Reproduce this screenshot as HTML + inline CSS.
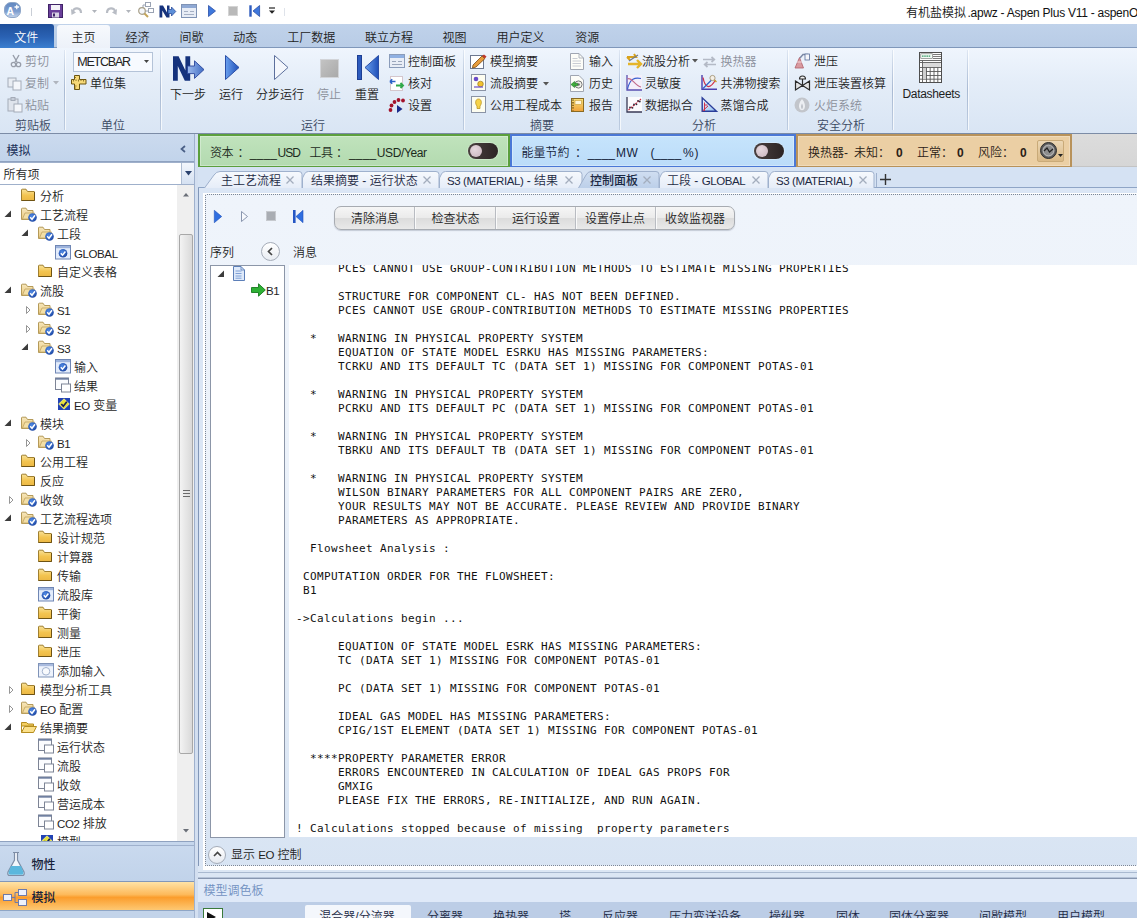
<!DOCTYPE html>
<html lang="zh-CN"><head><meta charset="utf-8"><title>Aspen Plus</title><style>
html,body{margin:0;padding:0}
body{width:1137px;height:918px;overflow:hidden;position:relative;background:#cddcf0;font-family:"Liberation Sans","Noto Sans CJK SC",sans-serif;font-size:12px;color:#1e1e1e;font-weight:350}
.a{position:absolute}
.t{position:absolute;white-space:nowrap;line-height:16px;height:16px}
.c{text-align:center}
.g{color:#8b909b}
svg{position:absolute;overflow:visible}
pre{margin:0}
.l{font-size:11.5px;letter-spacing:-.4px}
</style></head><body>
<div class="a" style="left:0px;top:0px;width:1137px;height:24px;background:#fff"></div>
<div class="t " style="left:906px;top:5px;color:#111">有机盐模拟</div>
<div class="t " id="fit0" style="left:967.5px;top:5px;letter-spacing:-0.260px;color:#111">.apwz - Aspen Plus V11 - aspenO</div>
<div class="a" style="left:0px;top:23.5px;width:1137px;height:24.5px;background:linear-gradient(#c0d2ea,#b8cce6)"></div>
<div class="a" style="left:0px;top:47px;width:1137px;height:1px;background:#7f97ba"></div>
<div class="a" style="left:0px;top:24px;width:54px;height:24px;background:linear-gradient(#1f4f9a 0%,#2a62b4 55%,#3b7fd0 100%);border-radius:0 3px 0 0"></div>
<div class="t c " style="left:-33.7px;width:120px;top:30px;color:#fff">文件</div>
<div class="a" style="left:57px;top:25px;width:53px;height:24px;background:linear-gradient(#f7f9fd,#ecf1f9);border-radius:3px 3px 0 0"></div>
<div class="t c " style="left:23.5px;width:120px;top:30px;color:#222">主页</div>
<div class="t c " style="left:77.5px;width:120px;top:30px;color:#222">经济</div>
<div class="t c " style="left:131.5px;width:120px;top:30px;color:#222">间歇</div>
<div class="t c " style="left:185.3px;width:120px;top:30px;color:#222">动态</div>
<div class="t c " style="left:251.3px;width:120px;top:30px;color:#222">工厂数据</div>
<div class="t c " style="left:329px;width:120px;top:30px;color:#222">联立方程</div>
<div class="t c " style="left:394.5px;width:120px;top:30px;color:#222">视图</div>
<div class="t c " style="left:460.5px;width:120px;top:30px;color:#222">用户定义</div>
<div class="t c " style="left:527.3px;width:120px;top:30px;color:#222">资源</div>
<div class="a" style="left:0px;top:48px;width:1137px;height:85px;background:linear-gradient(#eff5fd 0%,#e4edf8 40%,#d9e5f4 100%)"></div>
<div class="a" style="left:0px;top:133px;width:1137px;height:1px;background:#7c8ca6"></div>
<div class="a" style="left:64px;top:50px;width:1px;height:80px;background:linear-gradient(rgba(160,178,204,.2),#a9bad3 50%,rgba(160,178,204,.5))"></div>
<div class="a" style="left:65px;top:50px;width:1px;height:80px;background:rgba(255,255,255,.7)"></div>
<div class="a" style="left:160px;top:50px;width:1px;height:80px;background:linear-gradient(rgba(160,178,204,.2),#a9bad3 50%,rgba(160,178,204,.5))"></div>
<div class="a" style="left:161px;top:50px;width:1px;height:80px;background:rgba(255,255,255,.7)"></div>
<div class="a" style="left:463px;top:50px;width:1px;height:80px;background:linear-gradient(rgba(160,178,204,.2),#a9bad3 50%,rgba(160,178,204,.5))"></div>
<div class="a" style="left:464px;top:50px;width:1px;height:80px;background:rgba(255,255,255,.7)"></div>
<div class="a" style="left:619px;top:50px;width:1px;height:80px;background:linear-gradient(rgba(160,178,204,.2),#a9bad3 50%,rgba(160,178,204,.5))"></div>
<div class="a" style="left:620px;top:50px;width:1px;height:80px;background:rgba(255,255,255,.7)"></div>
<div class="a" style="left:787px;top:50px;width:1px;height:80px;background:linear-gradient(rgba(160,178,204,.2),#a9bad3 50%,rgba(160,178,204,.5))"></div>
<div class="a" style="left:788px;top:50px;width:1px;height:80px;background:rgba(255,255,255,.7)"></div>
<div class="a" style="left:892px;top:50px;width:1px;height:80px;background:linear-gradient(rgba(160,178,204,.2),#a9bad3 50%,rgba(160,178,204,.5))"></div>
<div class="a" style="left:893px;top:50px;width:1px;height:80px;background:rgba(255,255,255,.7)"></div>
<div class="a" style="left:967px;top:50px;width:1px;height:80px;background:linear-gradient(rgba(160,178,204,.2),#a9bad3 50%,rgba(160,178,204,.5))"></div>
<div class="a" style="left:968px;top:50px;width:1px;height:80px;background:rgba(255,255,255,.7)"></div>
<div class="t c " style="left:-27px;width:120px;top:118px;color:#3b4a63">剪贴板</div>
<div class="t c " style="left:53px;width:120px;top:118px;color:#3b4a63">单位</div>
<div class="t c " style="left:253px;width:120px;top:118px;color:#3b4a63">运行</div>
<div class="t c " style="left:482px;width:120px;top:118px;color:#3b4a63">摘要</div>
<div class="t c " style="left:644px;width:120px;top:118px;color:#3b4a63">分析</div>
<div class="t c " style="left:781px;width:120px;top:118px;color:#3b4a63">安全分析</div>
<svg style="left:9px;top:54px" width="14" height="14" viewBox="0 0 14 14"><path d="M4 1 L8 8 M10 1 L6 8" stroke="#989eaa" stroke-width="1.4" fill="none"/><circle cx="4.5" cy="10.5" r="2.2" fill="none" stroke="#989eaa" stroke-width="1.3"/><circle cx="9.5" cy="10.5" r="2.2" fill="none" stroke="#989eaa" stroke-width="1.3"/></svg>
<div class="t g" style="left:25px;top:54px;">剪切</div>
<svg style="left:7px;top:76px" width="16" height="14" viewBox="0 0 16 14"><rect x="1" y="2" width="8" height="9" fill="#e9edf3" stroke="#a4abb8"/><rect x="6" y="5" width="8" height="9" fill="#f4f6fa" stroke="#a4abb8"/></svg>
<div class="t g" style="left:25px;top:76px;">复制</div>
<svg style="left:53px;top:81px" width="6" height="4" viewBox="0 0 6 4"><path d="M0 0 H6 L3 3.5Z" fill="#b0b5be"/></svg>
<svg style="left:7px;top:97px" width="16" height="15" viewBox="0 0 16 15"><rect x="1" y="2" width="10" height="12" fill="#dfe4ec" stroke="#a4abb8"/><rect x="4" y="0.5" width="4" height="3" fill="#c5ccd8" stroke="#a4abb8"/><rect x="7" y="7" width="8" height="8" fill="#f4f6fa" stroke="#a4abb8"/></svg>
<div class="t g" style="left:25px;top:98px;">粘贴</div>
<div class="a" style="left:73px;top:51.5px;width:80px;height:20px;background:#f7faff;border:1px solid #b4c3d8;box-sizing:border-box"></div>
<div class="t " id="fit1" style="left:77.3px;top:54px;letter-spacing:-1.232px;color:#222;font-size:12.5px">METCBAR</div>
<svg style="left:144px;top:60px" width="5" height="3" viewBox="0 0 5 3"><path d="M0 0 H5 L2.500 3Z" fill="#444"/></svg>
<svg style="left:71px;top:75px" width="16" height="15" viewBox="0 0 16 15"><path d="M3.500 .5 H8.500 V4.500 H15 V9 H8.500 V14.500 H3.500 V9 H.5 V4.500 H3.500Z" fill="#f7d978" stroke="#6b5512" stroke-width="1"/><path d="M2.500 4.500v2M5 4.500v1.500M7.500 4.500v2M10 4.500v1.500M12.500 4.500v2M3.500 2.500h1.500M3.500 11h2M3.500 13h1.500" stroke="#7a6216" stroke-width=".8"/></svg>
<div class="t " style="left:90px;top:76px;">单位集</div>
<svg style="left:172px;top:55px" width="33" height="27" viewBox="0 0 33 27"><defs><linearGradient id="ng" x1="0" y1="0" x2="1" y2="0"><stop offset="0" stop-color="#9dbbee"/><stop offset="1" stop-color="#3f6cc4"/></linearGradient></defs><path d="M1 25.7 V1.3 H6.6 L13.4 15.5 V1.3 H18.2 V25.7 H12.8 L5.8 11 V25.7Z" fill="#15327c"/><path d="M15.5 11 H22.5 V5.8 L32 14.6 L22.5 23.4 V18.6 H15.5Z" fill="url(#ng)" stroke="#2a469c" stroke-width=".9"/></svg>
<div class="t c " style="left:128px;width:120px;top:87px;">下一步</div>
<svg style="left:225px;top:55px" width="15" height="25" viewBox="0 0 15 25"><defs><linearGradient id="gr1" x1="0" x2="1"><stop offset="0" stop-color="#6aa0ee"/><stop offset="1" stop-color="#1f4fb8"/></linearGradient></defs><path d="M0.5 0.5 L14 12.5 L0.5 24.5Z" fill="url(#gr1)" stroke="#2a4ea6" stroke-width="1"/></svg>
<div class="t c " style="left:171px;width:120px;top:87px;">运行</div>
<svg style="left:274px;top:55px" width="15" height="25" viewBox="0 0 15 25"><path d="M0.5 0.5 L14 12.5 L0.5 24.5Z" fill="#f4f7fc" stroke="#5c6f9c" stroke-width="1"/></svg>
<div class="t c " style="left:220px;width:120px;top:87px;">分步运行</div>
<svg style="left:320px;top:58.5px" width="19" height="19" viewBox="0 0 19 19"><defs><linearGradient id="sg" x1="0" y1="0" x2="1" y2="1"><stop offset="0" stop-color="#c4c4c4"/><stop offset="1" stop-color="#a9a9a9"/></linearGradient></defs><rect x=".5" y=".5" width="18" height="18" fill="url(#sg)" stroke="#d2d4d8"/></svg>
<div class="t c g" style="left:269px;width:120px;top:87px;">停止</div>
<svg style="left:357px;top:55px" width="22" height="25" viewBox="0 0 22 25"><rect x="0.5" y="0.5" width="4" height="24" fill="#2d5bbd" stroke="#1d3f94"/><path d="M21.5 0.5 L8 12.5 L21.5 24.5Z" fill="url(#gr1)" stroke="#2a4ea6" stroke-width="1"/></svg>
<div class="t c " style="left:307px;width:120px;top:87px;">重置</div>
<svg style="left:389px;top:54px" width="16" height="14" viewBox="0 0 16 14"><rect x=".5" y=".5" width="15" height="13" fill="#e8edf6" stroke="#8a9cba"/><rect x="1" y="1" width="14" height="3" fill="#8fb0e2"/><path d="M3 7.500h4M9 7.500h4M3 10.500h10" stroke="#9aa6bb" stroke-width="1"/></svg>
<div class="t " style="left:408px;top:54px;">控制面板</div>
<svg style="left:389px;top:76px" width="15" height="15" viewBox="0 0 15 15"><rect x="1.500" y=".5" width="12" height="14" fill="#fff" stroke="#d4c6cc"/><path d="M1 5.500h5.500M1 5.500l2.200-2.200M1 5.500l2.200 2.200" stroke="#2c62c9" stroke-width="1.600" fill="none"/><path d="M7 9.500h7M11.500 7l2.500 2.500-2.500 2.500" stroke="#2fa84a" stroke-width="1.900" fill="none"/></svg>
<div class="t " style="left:408px;top:76px;">核对</div>
<svg style="left:388px;top:97px" width="18" height="16" viewBox="0 0 18 16"><g fill="#a3122a"><circle cx="2.5" cy="13" r="1.9"/><circle cx="3.5" cy="8.5" r="1.9"/><circle cx="6.5" cy="5" r="1.9"/><circle cx="10.5" cy="3" r="1.9"/><circle cx="15" cy="3.5" r="1.9"/></g><path d="M9 8 L14.5 12 L9 16Z" fill="#1b2c8c"/></svg>
<div class="t " style="left:408px;top:98px;">设置</div>
<svg style="left:470px;top:53px" width="17" height="16" viewBox="0 0 17 16"><rect x=".5" y="2.5" width="13" height="13" fill="#fff" stroke="#6c7890"/><path d="M3 12 L12 3 L15 5.5 L6 14 L2.5 15Z" fill="#e79c3c" stroke="#7a4a12" stroke-width=".8"/><path d="M12 3 L15 5.5 L16.5 3.5 L14 1.5Z" fill="#c0392b"/></svg>
<div class="t " style="left:490px;top:54px;">模型摘要</div>
<svg style="left:471px;top:74px" width="15" height="17" viewBox="0 0 15 17"><rect x=".5" y=".5" width="14" height="16" fill="#fdfdf0" stroke="#8a93a5"/><circle cx="5" cy="5" r="2.3" fill="#6a4cc9"/><circle cx="9.5" cy="10" r="2.8" fill="#f2c12e" stroke="#8c6d10" stroke-width=".6"/><path d="M3 13h9" stroke="#6a4cc9" stroke-width="1.2"/></svg>
<div class="t " style="left:490px;top:76px;">流股摘要</div>
<svg style="left:543px;top:82px" width="6" height="4" viewBox="0 0 6 4"><path d="M0 0 H6 L3 3.5Z" fill="#555"/></svg>
<svg style="left:471px;top:96px" width="15" height="17" viewBox="0 0 15 17"><rect x=".5" y=".5" width="14" height="16" fill="#fdfdf0" stroke="#8a93a5"/><path d="M7.5 3 C4 3 4 8 6 10 V12.5 H9 V10 C11 8 11 3 7.5 3Z" fill="#f6d34a" stroke="#b48c14" stroke-width=".7"/></svg>
<div class="t " style="left:490px;top:98px;">公用工程成本</div>
<svg style="left:570px;top:53px" width="14" height="17" viewBox="0 0 14 17"><path d="M.5 .5 H9 L13.500 5 V16.500 H.5Z" fill="#fdfdf8" stroke="#a0a6b2"/><path d="M9 .5 V5 H13.500" fill="none" stroke="#a0a6b2" stroke-width=".8"/><path d="M2.500 5.500h5M2.500 8h8.500M2.500 10.500h8.500M2.500 13h8.500" stroke="#c9ccd4" stroke-width="1"/></svg>
<div class="t " style="left:589px;top:54px;">输入</div>
<svg style="left:570px;top:75px" width="14" height="17" viewBox="0 0 14 17"><path d="M.5 .5 H9 L13.500 5 V16.500 H.5Z" fill="#fdfdf8" stroke="#a0a6b2"/><circle cx="8.500" cy="9.500" r="3.600" fill="#f1f1ea" stroke="#777" stroke-width="1"/><circle cx="8.500" cy="9.500" r="1.300" fill="#666"/><path d="M1 9.500 L4.500 6.500 V8.300 H7.500 V10.700 H4.500 V12.500Z" fill="#3fae3a" stroke="#1f7a22" stroke-width=".6"/></svg>
<div class="t " style="left:589px;top:76px;">历史</div>
<svg style="left:571px;top:97.5px" width="13" height="14" viewBox="0 0 13 14"><defs><linearGradient id="rg" x1="0" y1="0" x2="0" y2="1"><stop offset="0" stop-color="#f7e27a"/><stop offset="1" stop-color="#f0a23a"/></linearGradient></defs><rect x=".5" y=".5" width="12" height="13" fill="url(#rg)" stroke="#8a6a22"/><rect x="4" y="2.500" width="6.500" height="4" fill="#fff6d8" stroke="#c79a3a" stroke-width=".6"/><path d="M2 1.500v11" stroke="#5a4310" stroke-width="1.300" stroke-dasharray="1.300 1.300"/></svg>
<div class="t " style="left:589px;top:98px;">报告</div>
<svg style="left:626px;top:53px" width="17" height="15" viewBox="0 0 17 15"><path d="M1 4h9l-2-3M1 4l3 3" stroke="#d9a21b" stroke-width="2" fill="none"/><path d="M2 11h13M11 7l4 4-4 4" stroke="#e5b52a" stroke-width="2.4" fill="none"/><path d="M3 8 L12 2" stroke="#6d7a8f" stroke-width="1.2"/></svg>
<div class="t " style="left:642px;top:54px;">流股分析</div>
<svg style="left:692px;top:59px" width="6" height="4" viewBox="0 0 6 4"><path d="M0 0 H6 L3 3.5Z" fill="#555"/></svg>
<svg style="left:702px;top:55.5px" width="15" height="12" viewBox="0 0 15 12"><path d="M1 3.500h11M9.500 1l2.800 2.500-2.800 2.500M14 8.500H3M5.500 6L2.700 8.500l2.800 2.500" stroke="#b4bac6" stroke-width="1.700" fill="none"/></svg>
<div class="t g" style="left:720.5px;top:54px;">换热器</div>
<svg style="left:626px;top:74.5px" width="16" height="16" viewBox="0 0 16 16"><rect x="1" y="0" width="15" height="15" fill="#f4f0fa"/><path d="M1 0 V15 H16" stroke="#5a4fb0" stroke-width="1.300" fill="none"/><path d="M1.500 14 C4 3 9 2.500 15 3.500" stroke="#3b5fd0" stroke-width="1.200" fill="none"/><path d="M1.500 4 C5 1 9 11 15 12" stroke="#c06a8a" stroke-width="1.100" fill="none"/></svg>
<div class="t " style="left:645px;top:76px;">灵敏度</div>
<svg style="left:701px;top:75px" width="16" height="15" viewBox="0 0 16 15"><path d="M1 0 V14.300 H16" stroke="#4a3fae" stroke-width="1.400" fill="none"/><path d="M2 2.500 C4 13 8.500 15 14.500 5" stroke="#d0304a" stroke-width="1.300" fill="none"/><path d="M2 13.500 L12 3.500" stroke="#2e62c9" stroke-width="1.200"/><circle cx="11.500" cy="3" r="2.600" fill="#f4efe6" stroke="#9a8a6a" stroke-width=".8"/><path d="M13.300 5 L15.500 7" stroke="#c9a23a" stroke-width="1.600"/></svg>
<div class="t " style="left:720.5px;top:76px;">共沸物搜索</div>
<svg style="left:626px;top:97px" width="16" height="16" viewBox="0 0 16 16"><rect x="1" y="0" width="15" height="15" fill="#fbfbfd"/><path d="M1 0 V15 H16" stroke="#3a3a55" stroke-width="1.300" fill="none"/><path d="M2.500 13 L15 2" stroke="#d0213a" stroke-width="1.100" stroke-dasharray="2 1"/><g fill="#2a2a3a"><circle cx="4" cy="10.500" r=".9"/><circle cx="6.500" cy="10.800" r=".9"/><circle cx="8" cy="7.500" r=".9"/><circle cx="10.500" cy="7.300" r=".9"/><circle cx="12" cy="3.800" r=".9"/><circle cx="13.800" cy="4.500" r=".9"/></g></svg>
<div class="t " style="left:645px;top:98px;">数据拟合</div>
<svg style="left:701px;top:97px" width="16" height="15" viewBox="0 0 16 15"><defs><linearGradient id="dg" x1="0" y1="0" x2="1" y2="1"><stop offset="0" stop-color="#f6f8ff"/><stop offset="1" stop-color="#8fc0f0"/></linearGradient></defs><path d="M1.200 .8 V14.300 H15.500Z" fill="url(#dg)" stroke="#2b3d9a" stroke-width="1.400"/><path d="M3.500 14 V5.500 M3.500 8 H6.500 M1.500 14 L7 9" stroke="#d0304a" stroke-width="1" fill="none"/></svg>
<div class="t " style="left:720.5px;top:98px;">蒸馏合成</div>
<svg style="left:794px;top:53px" width="17" height="16" viewBox="0 0 17 16"><path d="M1 15 L5.500 4.500 L9.500 15Z" fill="#d99aa0" stroke="#b0606a" stroke-width=".8"/><path d="M3 9 L8 9" stroke="#f3d6d8" stroke-width="1"/><path d="M6 5 L9 1.500 H14" stroke="#7d8aa6" stroke-width="1.500" fill="none"/><rect x="11" y="1" width="4.500" height="6" fill="#f4f6fa" stroke="#5a6f9a" stroke-width=".8"/></svg>
<div class="t " style="left:814px;top:54px;">泄压</div>
<svg style="left:794px;top:75px" width="17" height="16" viewBox="0 0 17 16"><path d="M1.500 6 L8.500 10.500 L1.500 15Z M15.500 6 L8.500 10.500 L15.500 15Z" fill="#e4e4e4" stroke="#2a2a2a" stroke-width="1.200"/><path d="M8.500 10.500 V4" stroke="#2a2a2a" stroke-width="1.200"/><path d="M5.500 4 A3 3 0 0 1 11.500 4Z" fill="#f4f4f4" stroke="#2a2a2a" stroke-width="1.100"/></svg>
<div class="t " style="left:814px;top:76px;">泄压装置核算</div>
<svg style="left:794px;top:96.5px" width="16" height="16" viewBox="0 0 16 16"><circle cx="8" cy="8" r="7.500" fill="#c2c5cb"/><path d="M8 2 C5 5.500 4.300 9 5.500 11.500 C6.500 13.700 9.500 13.700 10.500 11.500 C11.700 9 11 5.500 8 2Z" fill="#eceef2"/><path d="M8 6.500 C7 8.500 6.800 10.500 8 12.300 C9.200 10.500 9 8.500 8 6.500Z" fill="#b4b8c0"/></svg>
<div class="t g" style="left:814px;top:98px;">火炬系统</div>
<svg style="left:919px;top:52px" width="23" height="31" viewBox="0 0 23 31"><rect x=".5" y=".5" width="22" height="30" fill="#fdfdfd" stroke="#4e4e4e"/><rect x="1.800" y="1.800" width="11.500" height="4.700" fill="#f3fbf5" stroke="#6a6a6a" stroke-width=".6"/><path d="M3 4.200h8.500" stroke="#3a9a6a" stroke-width="1.300" stroke-dasharray="1.600 .6"/><path d="M14 2.500h8M14 4.500h8M14 6.500h8" stroke="#5a5a5a" stroke-width=".8"/><rect x="4" y="11" width="17.500" height="4" fill="#d9d9d9"/><path d="M1 8.500h21M1 10.500h21M1 15.500h21M1 19.500h21M1 23.500h21M1 27.200h21" stroke="#5a5a5a" stroke-width=".9"/><path d="M3.500 8.500V30M7.500 15.500V30M11.200 15.500V30M15 15.500V30M18.800 15.500V30" stroke="#5a5a5a" stroke-width=".9"/><rect x="4" y="16" width="3" height="11" fill="#cfcfcf"/></svg>
<div class="t " id="fit2" style="left:902.5px;top:86px;letter-spacing:-0.320px;">Datasheets</div>
<svg style="left:4px;top:2px" width="17" height="16" viewBox="0 0 17 16"><defs><linearGradient id="ag" x1="0" y1="0" x2="0" y2="1"><stop offset="0" stop-color="#5f86bf"/><stop offset=".6" stop-color="#7f9fd0"/><stop offset="1" stop-color="#c6d6ec"/></linearGradient></defs><rect x=".5" y=".5" width="16" height="15" rx="6.500" ry="6.500" fill="url(#ag)" stroke="#8ea6c8" stroke-width="1"/><text x="2.600" y="12.500" font-family="Liberation Sans,sans-serif" font-weight="bold" font-size="10.500" fill="#fff">A</text><path d="M10.500 5h4.500M12.750 2.800v4.400" stroke="#fff" stroke-width="1.300"/></svg>
<div class="a" style="left:31px;top:8px;width:1px;height:8px;background:#c9ced6"></div>
<svg style="left:48px;top:4px" width="15" height="14" viewBox="0 0 15 14"><rect x=".5" y=".5" width="14" height="13" fill="#6a3f9a" stroke="#3f2366"/><rect x="3" y="1" width="9" height="5" fill="#f3f1f7"/><rect x="4" y="8.5" width="7" height="5" fill="#d8d2e4"/><rect x="5" y="9.5" width="2" height="3" fill="#3f2366"/></svg>
<svg style="left:71px;top:5px" width="12" height="11" viewBox="0 0 12 11"><path d="M2 7 C2 2 10 2 10 8" stroke="#b8bcc4" stroke-width="2.2" fill="none"/><path d="M0 4 L5 7.5 L0.5 10Z" fill="#b8bcc4"/></svg>
<svg style="left:92px;top:10px" width="5" height="3" viewBox="0 0 5 3"><path d="M0 0H5L2.5 3Z" fill="#b0b4bb"/></svg>
<svg style="left:105px;top:5px" width="12" height="11" viewBox="0 0 12 11"><path d="M10 7 C10 2 2 2 2 8" stroke="#b8bcc4" stroke-width="2.2" fill="none"/><path d="M12 4 L7 7.5 L11.5 10Z" fill="#b8bcc4"/></svg>
<svg style="left:126px;top:10px" width="5" height="3" viewBox="0 0 5 3"><path d="M0 0H5L2.5 3Z" fill="#b0b4bb"/></svg>
<svg style="left:137px;top:2px" width="17" height="17" viewBox="0 0 17 17"><rect x="8.5" y=".5" width="5" height="4" fill="#fff" stroke="#9aa3b3"/><rect x="11.5" y="6.5" width="5" height="4" fill="#fff" stroke="#9aa3b3"/><path d="M8 3H6v6h5" stroke="#9aa3b3" fill="none"/><circle cx="5" cy="9" r="3.3" fill="#f5f7fb" stroke="#a8a08a" stroke-width="1.2"/><path d="M7.5 11.5 L11 15" stroke="#c4a55a" stroke-width="2"/></svg>
<svg style="left:159px;top:5px" width="17" height="13" viewBox="0 0 17 13"><path d="M.5 12.5 V.5 H4 L8 7.5 V.5 H10.5 V12.5 H7.5 L3.3 5.5 V12.5Z" fill="#15327c"/><path d="M9 4.5 H12.5 V2 L16.8 6.5 L12.5 11 V8.5 H9Z" fill="#5d8fd8" stroke="#1d3f94" stroke-width=".7"/></svg>
<svg style="left:181px;top:4px" width="16" height="14" viewBox="0 0 16 14"><rect x=".5" y=".5" width="15" height="13" fill="#e8edf6" stroke="#7f93b5"/><rect x="1" y="1" width="14" height="3" fill="#8fa9d4"/><path d="M3 7.5h4M9 7.5h4M3 10.5h10" stroke="#a5b0c4" stroke-width="1"/></svg>
<svg style="left:208px;top:5px" width="8" height="12" viewBox="0 0 8 12"><path d="M.5 .5 L7.5 6 L.5 11.5Z" fill="#3f78dc" stroke="#2a4ea6" stroke-width=".8"/></svg>
<svg style="left:228px;top:6px" width="10" height="10" viewBox="0 0 10 10"><rect x=".5" y=".5" width="9" height="9" fill="#b9b9b9" stroke="#d4d4d4"/></svg>
<svg style="left:249px;top:5px" width="11" height="12" viewBox="0 0 11 12"><rect x=".3" y=".3" width="2.4" height="11.4" fill="#2d5bbd"/><path d="M10.6 .5 L4 6 L10.6 11.5Z" fill="#3f78dc" stroke="#2a4ea6" stroke-width=".8"/></svg>
<svg style="left:269px;top:8px" width="6" height="6" viewBox="0 0 6 6"><path d="M0 0H6" stroke="#222" stroke-width="1.2"/><path d="M0 2.5H6L3 5.8Z" fill="#222"/></svg>
<div class="a" style="left:284px;top:8px;width:1px;height:8px;background:#dfe3ea"></div>
<div class="a" style="left:0px;top:134px;width:1137px;height:36px;background:#c9d8ec"></div>
<div class="a" style="left:0px;top:134px;width:196px;height:28px;background:linear-gradient(#cbdaee,#c2d4eb);border-bottom:1px solid #8fa2c0;box-sizing:border-box"></div>
<div class="t " style="left:6.5px;top:143px;color:#1a2f58;font-weight:400">模拟</div>
<svg style="left:180px;top:145px" width="6" height="8" viewBox="0 0 6 8"><path d="M5 1 L1.5 4 L5 7" stroke="#4a5f86" stroke-width="1.7" fill="none"/></svg>
<div class="a" style="left:0px;top:162px;width:195px;height:23px;background:#fff;border:1px solid #9fb0cb;border-left:none;box-sizing:border-box"></div>
<div class="t " style="left:3.5px;top:167px;">所有项</div>
<div class="a" style="left:181px;top:163px;width:13px;height:21px;background:linear-gradient(#f2f6fc,#d5e1f2);border-left:1px solid #aebdd3;box-sizing:border-box"></div>
<svg style="left:185px;top:171px" width="7" height="5" viewBox="0 0 7 5"><path d="M0 0H7L3.5 4.5Z" fill="#2a426e"/></svg>
<div class="a" style="left:0px;top:185px;width:196px;height:656px;background:#fff;overflow:hidden"></div>
<div class="a" style="left:177px;top:185px;width:17px;height:656px;background:#efefef"></div>
<svg style="left:183px;top:193px" width="6" height="4" viewBox="0 0 6 4"><path d="M0 3.5 L3 0 L6 3.5Z" fill="#6a6f78"/></svg>
<svg style="left:183px;top:829px" width="6" height="4" viewBox="0 0 6 4"><path d="M0 0 L3 3.5 L6 0Z" fill="#6a6f78"/></svg>
<div class="a" style="left:179px;top:234px;width:14px;height:520px;background:linear-gradient(90deg,#f3f3f3,#d9d9d9);border:1px solid #a8a8a8;border-radius:2px;box-sizing:border-box"></div>
<div class="a" style="left:183px;top:490px;width:7px;height:1px;background:#6a6a6a"></div>
<div class="a" style="left:183px;top:493px;width:7px;height:1px;background:#6a6a6a"></div>
<div class="a" style="left:183px;top:496px;width:7px;height:1px;background:#6a6a6a"></div>
<svg width="0" height="0" style="left:0;top:0"><defs><linearGradient id="fg" x1="0" y1="0" x2="0" y2="1"><stop offset="0" stop-color="#f8e29a"/><stop offset=".55" stop-color="#f3c450"/><stop offset="1" stop-color="#ecb844"/></linearGradient><linearGradient id="fg2" x1="0" y1="0" x2="0" y2="1"><stop offset="0" stop-color="#f6e7bd"/><stop offset="1" stop-color="#ecc97a"/></linearGradient><radialGradient id="cg" cx=".4" cy=".35" r=".75"><stop offset="0" stop-color="#4f8ae6"/><stop offset="1" stop-color="#173f9c"/></radialGradient></defs></svg>
<div class="a" style="left:0;top:185px;width:177px;height:656px;overflow:hidden">
<svg style="left:21px;top:3px" width="16" height="15"><path d="M.5 12.500 V2 Q.5 1.200 1.300 1.200 H5 L6.500 3.500 H13 Q13.500 3.500 13.500 4 V12.500Z" fill="url(#fg)" stroke="#a08030" stroke-width="1"/><path d="M.5 12.500 H13.500 V4" fill="none" stroke="#6e5314" stroke-width="1"/></svg><div class="t" style="left:40px;top:4px">分析</div>
<svg style="left:4px;top:25px" width="8" height="8"><path d="M7 .5 V7 H.5Z" fill="#3c3c3c"/></svg><svg style="left:21px;top:22px" width="16" height="15"><path d="M.5 12.500 V2 Q.5 1.200 1.300 1.200 H5 L6.500 3.500 H12 V12.500Z" fill="url(#fg2)" stroke="#b59a58" stroke-width="1"/><path d="M1.500 12 L4 6 H13.500 L11.500 12Z" fill="#f3dfa6" stroke="#c0a566" stroke-width=".8"/><circle cx="11.500" cy="10.500" r="4.300" fill="url(#cg)"/><path d="M9.200 10.300 L11 12.300 L14 8.300" stroke="#fff" stroke-width="1.500" fill="none"/></svg><div class="t" style="left:40px;top:23px">工艺流程</div>
<svg style="left:21px;top:44px" width="8" height="8"><path d="M7 .5 V7 H.5Z" fill="#3c3c3c"/></svg><svg style="left:38px;top:41px" width="16" height="15"><path d="M.5 12.500 V2 Q.5 1.200 1.300 1.200 H5 L6.500 3.500 H12 V12.500Z" fill="url(#fg2)" stroke="#b59a58" stroke-width="1"/><path d="M1.500 12 L4 6 H13.500 L11.500 12Z" fill="#f3dfa6" stroke="#c0a566" stroke-width=".8"/><circle cx="11.500" cy="10.500" r="4.300" fill="url(#cg)"/><path d="M9.200 10.300 L11 12.300 L14 8.300" stroke="#fff" stroke-width="1.500" fill="none"/></svg><div class="t" style="left:57px;top:42px">工段</div>
<svg style="left:55px;top:60px" width="16" height="15"><rect x=".5" y=".5" width="15" height="13.500" fill="#e3ecfb" stroke="#6f86b4"/><rect x="1" y="1" width="14" height="2.200" fill="#9db3dc"/><circle cx="8" cy="8.300" r="4.300" fill="url(#cg)"/><path d="M5.800 8.300 L7.500 10.200 L10.400 6.500" stroke="#fff" stroke-width="1.500" fill="none"/></svg><div class="t" style="left:74px;top:61px"><span class="l">GLOBAL</span></div>
<svg style="left:38px;top:79px" width="16" height="15"><path d="M.5 12.500 V2 Q.5 1.200 1.300 1.200 H5 L6.500 3.500 H13 Q13.500 3.500 13.500 4 V12.500Z" fill="url(#fg)" stroke="#a08030" stroke-width="1"/><path d="M.5 12.500 H13.500 V4" fill="none" stroke="#6e5314" stroke-width="1"/></svg><div class="t" style="left:57px;top:80px">自定义表格</div>
<svg style="left:4px;top:101px" width="8" height="8"><path d="M7 .5 V7 H.5Z" fill="#3c3c3c"/></svg><svg style="left:21px;top:98px" width="16" height="15"><path d="M.5 12.500 V2 Q.5 1.200 1.300 1.200 H5 L6.500 3.500 H12 V12.500Z" fill="url(#fg2)" stroke="#b59a58" stroke-width="1"/><path d="M1.500 12 L4 6 H13.500 L11.500 12Z" fill="#f3dfa6" stroke="#c0a566" stroke-width=".8"/><circle cx="11.500" cy="10.500" r="4.300" fill="url(#cg)"/><path d="M9.200 10.300 L11 12.300 L14 8.300" stroke="#fff" stroke-width="1.500" fill="none"/></svg><div class="t" style="left:40px;top:99px">流股</div>
<svg style="left:25px;top:121px" width="7" height="8"><path d="M1.500 .5 L5 4 L1.500 7.500Z" fill="#fff" stroke="#8a8a8a" stroke-width=".9"/></svg><svg style="left:38px;top:117px" width="16" height="15"><path d="M.5 12.500 V2 Q.5 1.200 1.300 1.200 H5 L6.500 3.500 H12 V12.500Z" fill="url(#fg2)" stroke="#b59a58" stroke-width="1"/><path d="M1.500 12 L4 6 H13.500 L11.500 12Z" fill="#f3dfa6" stroke="#c0a566" stroke-width=".8"/><circle cx="11.500" cy="10.500" r="4.300" fill="url(#cg)"/><path d="M9.200 10.300 L11 12.300 L14 8.300" stroke="#fff" stroke-width="1.500" fill="none"/></svg><div class="t" style="left:57px;top:118px"><span class="l">S1</span></div>
<svg style="left:25px;top:140px" width="7" height="8"><path d="M1.500 .5 L5 4 L1.500 7.500Z" fill="#fff" stroke="#8a8a8a" stroke-width=".9"/></svg><svg style="left:38px;top:136px" width="16" height="15"><path d="M.5 12.500 V2 Q.5 1.200 1.300 1.200 H5 L6.500 3.500 H12 V12.500Z" fill="url(#fg2)" stroke="#b59a58" stroke-width="1"/><path d="M1.500 12 L4 6 H13.500 L11.500 12Z" fill="#f3dfa6" stroke="#c0a566" stroke-width=".8"/><circle cx="11.500" cy="10.500" r="4.300" fill="url(#cg)"/><path d="M9.200 10.300 L11 12.300 L14 8.300" stroke="#fff" stroke-width="1.500" fill="none"/></svg><div class="t" style="left:57px;top:137px"><span class="l">S2</span></div>
<svg style="left:21px;top:158px" width="8" height="8"><path d="M7 .5 V7 H.5Z" fill="#3c3c3c"/></svg><svg style="left:38px;top:155px" width="16" height="15"><path d="M.5 12.500 V2 Q.5 1.200 1.300 1.200 H5 L6.500 3.500 H12 V12.500Z" fill="url(#fg2)" stroke="#b59a58" stroke-width="1"/><path d="M1.500 12 L4 6 H13.500 L11.500 12Z" fill="#f3dfa6" stroke="#c0a566" stroke-width=".8"/><circle cx="11.500" cy="10.500" r="4.300" fill="url(#cg)"/><path d="M9.200 10.300 L11 12.300 L14 8.300" stroke="#fff" stroke-width="1.500" fill="none"/></svg><div class="t" style="left:57px;top:156px"><span class="l">S3</span></div>
<svg style="left:55px;top:174px" width="16" height="15"><rect x=".5" y=".5" width="15" height="13.500" fill="#e3ecfb" stroke="#6f86b4"/><rect x="1" y="1" width="14" height="2.200" fill="#9db3dc"/><circle cx="8" cy="8.300" r="4.300" fill="url(#cg)"/><path d="M5.800 8.300 L7.500 10.200 L10.400 6.500" stroke="#fff" stroke-width="1.500" fill="none"/></svg><div class="t" style="left:74px;top:175px">输入</div>
<svg style="left:55px;top:193px" width="16" height="15"><rect x=".5" y="0" width="13" height="11.500" fill="#fbfcfe" stroke="#7d8495"/><path d="M.5 .8H13.500" stroke="#6f7f9f" stroke-width="1.800"/><rect x="6.500" y="6" width="9" height="8" fill="#fff" stroke="#7d8495"/></svg><div class="t" style="left:74px;top:194px">结果</div>
<svg style="left:55px;top:212px" width="16" height="15"><rect x="3" y="1" width="12" height="12" fill="#2142b4"/><path d="M9 1.800 L14.300 7 L9 12.200 L3.700 7Z" fill="#e9e23a" stroke="#f6f4a0" stroke-width=".7"/><path d="M6.300 7 L8.300 9.200 L11.800 4.800" stroke="#141c5a" stroke-width="1.700" fill="none"/></svg><div class="t" style="left:74px;top:213px"><span class="l">EO</span> 变量</div>
<svg style="left:4px;top:234px" width="8" height="8"><path d="M7 .5 V7 H.5Z" fill="#3c3c3c"/></svg><svg style="left:21px;top:231px" width="16" height="15"><path d="M.5 12.500 V2 Q.5 1.200 1.300 1.200 H5 L6.500 3.500 H12 V12.500Z" fill="url(#fg2)" stroke="#b59a58" stroke-width="1"/><path d="M1.500 12 L4 6 H13.500 L11.500 12Z" fill="#f3dfa6" stroke="#c0a566" stroke-width=".8"/><circle cx="11.500" cy="10.500" r="4.300" fill="url(#cg)"/><path d="M9.200 10.300 L11 12.300 L14 8.300" stroke="#fff" stroke-width="1.500" fill="none"/></svg><div class="t" style="left:40px;top:232px">模块</div>
<svg style="left:25px;top:254px" width="7" height="8"><path d="M1.500 .5 L5 4 L1.500 7.500Z" fill="#fff" stroke="#8a8a8a" stroke-width=".9"/></svg><svg style="left:38px;top:250px" width="16" height="15"><path d="M.5 12.500 V2 Q.5 1.200 1.300 1.200 H5 L6.500 3.500 H12 V12.500Z" fill="url(#fg2)" stroke="#b59a58" stroke-width="1"/><path d="M1.500 12 L4 6 H13.500 L11.500 12Z" fill="#f3dfa6" stroke="#c0a566" stroke-width=".8"/><circle cx="11.500" cy="10.500" r="4.300" fill="url(#cg)"/><path d="M9.200 10.300 L11 12.300 L14 8.300" stroke="#fff" stroke-width="1.500" fill="none"/></svg><div class="t" style="left:57px;top:251px"><span class="l">B1</span></div>
<svg style="left:21px;top:269px" width="16" height="15"><path d="M.5 12.500 V2 Q.5 1.200 1.300 1.200 H5 L6.500 3.500 H13 Q13.500 3.500 13.500 4 V12.500Z" fill="url(#fg)" stroke="#a08030" stroke-width="1"/><path d="M.5 12.500 H13.500 V4" fill="none" stroke="#6e5314" stroke-width="1"/></svg><div class="t" style="left:40px;top:270px">公用工程</div>
<svg style="left:21px;top:288px" width="16" height="15"><path d="M.5 12.500 V2 Q.5 1.200 1.300 1.200 H5 L6.500 3.500 H13 Q13.500 3.500 13.500 4 V12.500Z" fill="url(#fg)" stroke="#a08030" stroke-width="1"/><path d="M.5 12.500 H13.500 V4" fill="none" stroke="#6e5314" stroke-width="1"/></svg><div class="t" style="left:40px;top:289px">反应</div>
<svg style="left:8px;top:311px" width="7" height="8"><path d="M1.500 .5 L5 4 L1.500 7.500Z" fill="#fff" stroke="#8a8a8a" stroke-width=".9"/></svg><svg style="left:21px;top:307px" width="16" height="15"><path d="M.5 12.500 V2 Q.5 1.200 1.300 1.200 H5 L6.500 3.500 H12 V12.500Z" fill="url(#fg2)" stroke="#b59a58" stroke-width="1"/><path d="M1.500 12 L4 6 H13.500 L11.500 12Z" fill="#f3dfa6" stroke="#c0a566" stroke-width=".8"/><circle cx="11.500" cy="10.500" r="4.300" fill="url(#cg)"/><path d="M9.200 10.300 L11 12.300 L14 8.300" stroke="#fff" stroke-width="1.500" fill="none"/></svg><div class="t" style="left:40px;top:308px">收敛</div>
<svg style="left:4px;top:329px" width="8" height="8"><path d="M7 .5 V7 H.5Z" fill="#3c3c3c"/></svg><svg style="left:21px;top:326px" width="16" height="15"><path d="M.5 12.500 V2 Q.5 1.200 1.300 1.200 H5 L6.500 3.500 H12 V12.500Z" fill="url(#fg2)" stroke="#b59a58" stroke-width="1"/><path d="M1.500 12 L4 6 H13.500 L11.500 12Z" fill="#f3dfa6" stroke="#c0a566" stroke-width=".8"/><circle cx="11.500" cy="10.500" r="4.300" fill="url(#cg)"/><path d="M9.200 10.300 L11 12.300 L14 8.300" stroke="#fff" stroke-width="1.500" fill="none"/></svg><div class="t" style="left:40px;top:327px">工艺流程选项</div>
<svg style="left:38px;top:345px" width="16" height="15"><path d="M.5 12.500 V2 Q.5 1.200 1.300 1.200 H5 L6.500 3.500 H13 Q13.500 3.500 13.500 4 V12.500Z" fill="url(#fg)" stroke="#a08030" stroke-width="1"/><path d="M.5 12.500 H13.500 V4" fill="none" stroke="#6e5314" stroke-width="1"/></svg><div class="t" style="left:57px;top:346px">设计规范</div>
<svg style="left:38px;top:364px" width="16" height="15"><path d="M.5 12.500 V2 Q.5 1.200 1.300 1.200 H5 L6.500 3.500 H13 Q13.500 3.500 13.500 4 V12.500Z" fill="url(#fg)" stroke="#a08030" stroke-width="1"/><path d="M.5 12.500 H13.500 V4" fill="none" stroke="#6e5314" stroke-width="1"/></svg><div class="t" style="left:57px;top:365px">计算器</div>
<svg style="left:38px;top:383px" width="16" height="15"><path d="M.5 12.500 V2 Q.5 1.200 1.300 1.200 H5 L6.500 3.500 H13 Q13.500 3.500 13.500 4 V12.500Z" fill="url(#fg)" stroke="#a08030" stroke-width="1"/><path d="M.5 12.500 H13.500 V4" fill="none" stroke="#6e5314" stroke-width="1"/></svg><div class="t" style="left:57px;top:384px">传输</div>
<svg style="left:38px;top:402px" width="16" height="15"><rect x=".5" y=".5" width="15" height="13.500" fill="#e3ecfb" stroke="#6f86b4"/><rect x="1" y="1" width="14" height="2.200" fill="#9db3dc"/><circle cx="8" cy="8.300" r="4.300" fill="url(#cg)"/><path d="M5.800 8.300 L7.500 10.200 L10.400 6.500" stroke="#fff" stroke-width="1.500" fill="none"/></svg><div class="t" style="left:57px;top:403px">流股库</div>
<svg style="left:38px;top:421px" width="16" height="15"><path d="M.5 12.500 V2 Q.5 1.200 1.300 1.200 H5 L6.500 3.500 H13 Q13.500 3.500 13.500 4 V12.500Z" fill="url(#fg)" stroke="#a08030" stroke-width="1"/><path d="M.5 12.500 H13.500 V4" fill="none" stroke="#6e5314" stroke-width="1"/></svg><div class="t" style="left:57px;top:422px">平衡</div>
<svg style="left:38px;top:440px" width="16" height="15"><path d="M.5 12.500 V2 Q.5 1.200 1.300 1.200 H5 L6.500 3.500 H13 Q13.500 3.500 13.500 4 V12.500Z" fill="url(#fg)" stroke="#a08030" stroke-width="1"/><path d="M.5 12.500 H13.500 V4" fill="none" stroke="#6e5314" stroke-width="1"/></svg><div class="t" style="left:57px;top:441px">测量</div>
<svg style="left:38px;top:459px" width="16" height="15"><path d="M.5 12.500 V2 Q.5 1.200 1.300 1.200 H5 L6.500 3.500 H13 Q13.500 3.500 13.500 4 V12.500Z" fill="url(#fg)" stroke="#a08030" stroke-width="1"/><path d="M.5 12.500 H13.500 V4" fill="none" stroke="#6e5314" stroke-width="1"/></svg><div class="t" style="left:57px;top:460px">泄压</div>
<svg style="left:38px;top:478px" width="16" height="15"><rect x=".5" y=".5" width="15" height="13.500" fill="#eef3fc" stroke="#7f93b8"/><rect x="1" y="1" width="14" height="2.200" fill="#a9bbde"/><circle cx="8" cy="8.300" r="3.800" fill="#f8fafd" stroke="#a3b3cf"/></svg><div class="t" style="left:57px;top:479px">添加输入</div>
<svg style="left:8px;top:501px" width="7" height="8"><path d="M1.500 .5 L5 4 L1.500 7.500Z" fill="#fff" stroke="#8a8a8a" stroke-width=".9"/></svg><svg style="left:21px;top:497px" width="16" height="15"><path d="M.5 12.500 V2 Q.5 1.200 1.300 1.200 H5 L6.500 3.500 H13 Q13.500 3.500 13.500 4 V12.500Z" fill="url(#fg)" stroke="#a08030" stroke-width="1"/><path d="M.5 12.500 H13.500 V4" fill="none" stroke="#6e5314" stroke-width="1"/></svg><div class="t" style="left:40px;top:498px">模型分析工具</div>
<svg style="left:8px;top:520px" width="7" height="8"><path d="M1.500 .5 L5 4 L1.500 7.500Z" fill="#fff" stroke="#8a8a8a" stroke-width=".9"/></svg><svg style="left:21px;top:516px" width="16" height="15"><path d="M.5 12.500 V2 Q.5 1.200 1.300 1.200 H5 L6.500 3.500 H12 V12.500Z" fill="url(#fg2)" stroke="#b59a58" stroke-width="1"/><path d="M1.500 12 L4 6 H13.500 L11.500 12Z" fill="#f3dfa6" stroke="#c0a566" stroke-width=".8"/><circle cx="11.500" cy="10.500" r="4.300" fill="url(#cg)"/><path d="M9.200 10.300 L11 12.300 L14 8.300" stroke="#fff" stroke-width="1.500" fill="none"/></svg><div class="t" style="left:40px;top:517px"><span class="l">EO</span> 配置</div>
<svg style="left:4px;top:538px" width="8" height="8"><path d="M7 .5 V7 H.5Z" fill="#3c3c3c"/></svg><svg style="left:21px;top:535px" width="16" height="15"><path d="M.5 2.5 H5.5 L7 4 H12.5 V6 H.5Z M.5 12.5 V3" fill="#f4cf62" stroke="#b58d1f"/><path d="M.5 12.5 L3.5 6.5 H15.5 L12.5 12.5Z" fill="#fbe08a" stroke="#b58d1f"/></svg><div class="t" style="left:40px;top:536px">结果摘要</div>
<svg style="left:38px;top:554px" width="16" height="15"><rect x=".5" y="0" width="13" height="11.500" fill="#fbfcfe" stroke="#7d8495"/><path d="M.5 .8H13.500" stroke="#6f7f9f" stroke-width="1.800"/><rect x="6.500" y="6" width="9" height="8" fill="#fff" stroke="#7d8495"/></svg><div class="t" style="left:57px;top:555px">运行状态</div>
<svg style="left:38px;top:573px" width="16" height="15"><rect x=".5" y="0" width="13" height="11.500" fill="#fbfcfe" stroke="#7d8495"/><path d="M.5 .8H13.500" stroke="#6f7f9f" stroke-width="1.800"/><rect x="6.500" y="6" width="9" height="8" fill="#fff" stroke="#7d8495"/></svg><div class="t" style="left:57px;top:574px">流股</div>
<svg style="left:38px;top:592px" width="16" height="15"><rect x=".5" y="0" width="13" height="11.500" fill="#fbfcfe" stroke="#7d8495"/><path d="M.5 .8H13.500" stroke="#6f7f9f" stroke-width="1.800"/><rect x="6.500" y="6" width="9" height="8" fill="#fff" stroke="#7d8495"/></svg><div class="t" style="left:57px;top:593px">收敛</div>
<svg style="left:38px;top:611px" width="16" height="15"><rect x=".5" y="0" width="13" height="11.500" fill="#fbfcfe" stroke="#7d8495"/><path d="M.5 .8H13.500" stroke="#6f7f9f" stroke-width="1.800"/><rect x="6.500" y="6" width="9" height="8" fill="#fff" stroke="#7d8495"/></svg><div class="t" style="left:57px;top:612px">营运成本</div>
<svg style="left:38px;top:630px" width="16" height="15"><rect x=".5" y="0" width="13" height="11.500" fill="#fbfcfe" stroke="#7d8495"/><path d="M.5 .8H13.500" stroke="#6f7f9f" stroke-width="1.800"/><rect x="6.500" y="6" width="9" height="8" fill="#fff" stroke="#7d8495"/></svg><div class="t" style="left:57px;top:631px"><span class="l">CO2</span> 排放</div>
<svg style="left:38px;top:649px" width="16" height="15"><rect x="3" y="1" width="12" height="12" fill="#2142b4"/><path d="M9 1.800 L14.300 7 L9 12.200 L3.700 7Z" fill="#e9e23a" stroke="#f6f4a0" stroke-width=".7"/><path d="M6.300 7 L8.300 9.200 L11.800 4.800" stroke="#141c5a" stroke-width="1.700" fill="none"/></svg><div class="t" style="left:57px;top:650px">模型</div>
</div>
<div class="a" style="left:0px;top:841px;width:196px;height:5px;background:#c5d6ec;border-top:1px solid #8fa2c0;box-sizing:border-box"></div>
<div class="a" style="left:0px;top:845px;width:196px;height:37px;background:linear-gradient(#c9d9ee,#c1d3ea);border-top:1px solid #9fb1cd;border-bottom:1px solid #8297b8;box-sizing:border-box"></div>
<svg style="left:5px;top:851px" width="21" height="25" viewBox="0 0 21 25"><path d="M8 1.500 H14 M9.500 2 V9 L3 21 Q2 24.500 5 24.500 H17 Q20 24.500 19 21 L12.500 9 V2" fill="#f3f7fc" stroke="#7d8da6" stroke-width="1.200"/><path d="M6 15 L3.600 21 Q3 23.800 5.300 23.800 H16.700 Q19 23.800 18.400 21 L16 15Z" fill="#5bb7dd"/></svg>
<div class="t " style="left:31.5px;top:857px;font-weight:500;color:#16223a">物性</div>
<div class="a" style="left:0px;top:882px;width:196px;height:29px;background:linear-gradient(#ffe3a6 0%,#fdb95a 45%,#fb9d2c 55%,#fdc873 100%);border-bottom:1px solid #8fa6c6;box-sizing:border-box"></div>
<svg style="left:3px;top:889px" width="26" height="17" viewBox="0 0 26 17"><rect x=".5" y="5.500" width="8" height="6" fill="#eef2fc" stroke="#6f7aa8"/><rect x="15.500" y=".5" width="8" height="6" fill="#eef2fc" stroke="#6f7aa8"/><rect x="15.500" y="10.500" width="8" height="6" fill="#eef2fc" stroke="#6f7aa8"/><path d="M8.500 8.500 H12 M12 3.500 V13.500 M12 3.500 H15.500 M12 13.500 H15.500" stroke="#6f7aa8" fill="none"/></svg>
<div class="t " style="left:31.5px;top:890px;font-weight:500;color:#16223a">模拟</div>
<div class="a" style="left:0px;top:911px;width:196px;height:7px;background:#c3d4ea"></div>
<div class="a" style="left:194px;top:134px;width:4px;height:784px;background:#d3dff0"></div>
<div class="a" style="left:194px;top:134px;width:1px;height:784px;background:#9fb1cd"></div>
<div class="a" style="left:1072px;top:134px;width:65px;height:33px;background:linear-gradient(#dcdcdc,#d6d6d6);border-bottom:1px solid #c4c4c4;box-sizing:border-box"></div>
<div class="a" style="left:198px;top:134px;width:312px;height:33.5px;background:linear-gradient(#c0e3bc,#b3dab0);border:2px solid #5b9f3d;box-sizing:border-box;box-shadow:inset 0 0 0 1px rgba(255,255,255,.3)"></div>
<div class="t " style="left:210px;top:145px;color:#1c2a1c;letter-spacing:-.5px">资本</div>
<div class="t " style="left:237.5px;top:145px;color:#1c2a1c">：</div>
<div class="t " id="fit3" style="left:249.7px;top:145px;letter-spacing:0.199px;color:#1c2a1c">____</div>
<div class="t " id="fit4" style="left:277.5px;top:145px;letter-spacing:-0.948px;color:#1c2a1c">USD</div>
<div class="t " style="left:309.5px;top:145px;color:#1c2a1c;letter-spacing:-.5px">工具</div>
<div class="t " style="left:336px;top:145px;color:#1c2a1c">：</div>
<div class="t " id="fit5" style="left:348.9px;top:145px;letter-spacing:0.199px;color:#1c2a1c">____</div>
<div class="t " id="fit6" style="left:376.7px;top:145px;letter-spacing:-0.365px;color:#1c2a1c">USD/Year</div>
<div class="a" style="left:468px;top:143px;width:29.5px;height:15.5px;background:linear-gradient(90deg,#4a4040,#2c2424);border-radius:8px;box-shadow:0 0 0 1px rgba(255,255,255,.25)"></div>
<div class="a" style="left:470px;top:145px;width:12px;height:12px;background:radial-gradient(circle at 40% 35%,#e6d8de,#c9b4be);border-radius:6px"></div>
<div class="a" style="left:510px;top:134px;width:286px;height:33.5px;background:linear-gradient(#c6e4fc,#bbdcf9);border:2px solid #4a78d6;box-sizing:border-box;box-shadow:inset 0 0 0 1px rgba(255,255,255,.3)"></div>
<div class="t " style="left:521.5px;top:145px;color:#15243c">能量节約</div>
<div class="t " style="left:575px;top:145px;color:#15243c">：</div>
<div class="t " id="fit7" style="left:587.8px;top:145px;letter-spacing:0.149px;color:#15243c">____</div>
<div class="t " id="fit8" style="left:616px;top:145px;letter-spacing:0.586px;color:#15243c">MW</div>
<div class="t " id="fit9" style="left:650.5px;top:145px;letter-spacing:-0.500px;color:#15243c">(</div>
<div class="t " id="fit10" style="left:654px;top:145px;letter-spacing:0.174px;color:#15243c">____</div>
<div class="t " id="fit11" style="left:683px;top:145px;letter-spacing:0.914px;color:#15243c">%)</div>
<div class="a" style="left:754px;top:143px;width:29.5px;height:15.5px;background:linear-gradient(90deg,#4a4040,#2c2424);border-radius:8px;box-shadow:0 0 0 1px rgba(255,255,255,.25)"></div>
<div class="a" style="left:756px;top:145px;width:12px;height:12px;background:radial-gradient(circle at 40% 35%,#e6d8de,#c9b4be);border-radius:6px"></div>
<div class="a" style="left:796px;top:134px;width:276px;height:33.5px;background:#ebcfa4;border:2px solid #b8925a;box-sizing:border-box;box-shadow:inset 0 0 0 1px rgba(255,255,255,.25)"></div>
<div class="t " style="left:808px;top:145px;color:#2a2116">换热器-</div>
<div class="t " style="left:854px;top:145px;color:#2a2116">未知：</div>
<div class="t " style="left:917px;top:145px;color:#2a2116">正常：</div>
<div class="t " style="left:978px;top:145px;color:#2a2116">风险：</div>
<div class="t " style="left:896px;top:145px;color:#2a2116"><b>0</b></div>
<div class="t " style="left:957px;top:145px;color:#2a2116"><b>0</b></div>
<div class="t " style="left:1020px;top:145px;color:#2a2116"><b>0</b></div>
<div class="a" style="left:1037px;top:140px;width:27px;height:22px;background:linear-gradient(#ecd7b4,#d9b986);border:1px solid #c9aa78;border-radius:2px;box-sizing:border-box"></div>
<svg style="left:1040px;top:142px" width="17" height="17" viewBox="0 0 17 17"><circle cx="8.500" cy="8.500" r="8" fill="#5a5a5a" stroke="#2e2e2e"/><circle cx="8.500" cy="8.500" r="5.500" fill="#8e8e8e" stroke="#d6d6d6" stroke-width=".8"/><path d="M4 9 L7 6 L9.500 10 L13 7" stroke="#222" stroke-width="1.300" fill="none"/></svg>
<svg style="left:1058px;top:154px" width="5" height="3" viewBox="0 0 5 3"><path d="M0 0H5L2.500 3Z" fill="#222"/></svg>
<div class="a" style="left:198px;top:167px;width:939px;height:21px;background:#d5e2f3"></div>
<div class="a" style="left:198px;top:187px;width:939px;height:1px;background:#8fa5c6"></div>
<svg style="left:204px;top:171px" width="99" height="17"><defs><linearGradient id="tg216" x1="0" y1="0" x2="0" y2="1"><stop offset="0" stop-color="#f6f9fd"/><stop offset="1" stop-color="#e6edf8"/></linearGradient></defs><path d="M.5 17 L10 4 Q12.5 .5 16 .5 H95 Q98 .5 98 3.5 V17" fill="url(#tg216)" stroke="#9fb1cd"/></svg>
<div class="t " style="left:221px;top:173px;color:#1d2a44">主工艺流程</div>
<svg style="left:286px;top:176px" width="8" height="8" viewBox="0 0 8 8"><path d="M.5 .5 L7.5 7.5 M7.5 .5 L.5 7.5" stroke="#a3adbd" stroke-width="1.3"/></svg>
<svg style="left:290px;top:171px" width="150" height="17"><defs><linearGradient id="tg302" x1="0" y1="0" x2="0" y2="1"><stop offset="0" stop-color="#f6f9fd"/><stop offset="1" stop-color="#e6edf8"/></linearGradient></defs><path d="M12.5 17 V7 L14.5 3 Q15.7 .5 18.5 .5 H146 Q149 .5 149 3.5 V17" fill="url(#tg302)" stroke="#9fb1cd"/></svg>
<div class="t " style="left:311px;top:173px;color:#1d2a44">结果摘要 - 运行状态</div>
<svg style="left:423px;top:176px" width="8" height="8" viewBox="0 0 8 8"><path d="M.5 .5 L7.5 7.5 M7.5 .5 L.5 7.5" stroke="#a3adbd" stroke-width="1.3"/></svg>
<svg style="left:427px;top:171px" width="156" height="17"><defs><linearGradient id="tg439" x1="0" y1="0" x2="0" y2="1"><stop offset="0" stop-color="#f6f9fd"/><stop offset="1" stop-color="#e6edf8"/></linearGradient></defs><path d="M12.5 17 V7 L14.5 3 Q15.7 .5 18.5 .5 H152 Q155 .5 155 3.5 V17" fill="url(#tg439)" stroke="#9fb1cd"/></svg>
<div class="t " style="left:447px;top:173px;color:#1d2a44"><span class="l">S3 (MATERIAL)</span> - 结果</div>
<svg style="left:565px;top:176px" width="8" height="8" viewBox="0 0 8 8"><path d="M.5 .5 L7.5 7.5 M7.5 .5 L.5 7.5" stroke="#a3adbd" stroke-width="1.3"/></svg>
<svg style="left:578px;top:171px" width="82" height="17"><defs><linearGradient id="tg590" x1="0" y1="0" x2="0" y2="1"><stop offset="0" stop-color="#d0def1"/><stop offset="1" stop-color="#bccfe9"/></linearGradient></defs><path d="M.5 17 L8 4 Q10 .5 13 .5 H78 Q81 .5 81 3.5 V17" fill="url(#tg590)" stroke="#9fb1cd"/></svg>
<div class="t " style="left:590px;top:173px;color:#1d2a44;font-weight:500">控制面板</div>
<svg style="left:643px;top:176px" width="8" height="8" viewBox="0 0 8 8"><path d="M.5 .5 L7.5 7.5 M7.5 .5 L.5 7.5" stroke="#a3adbd" stroke-width="1.3"/></svg>
<svg style="left:647px;top:171px" width="122" height="17"><defs><linearGradient id="tg659" x1="0" y1="0" x2="0" y2="1"><stop offset="0" stop-color="#f6f9fd"/><stop offset="1" stop-color="#e6edf8"/></linearGradient></defs><path d="M12.5 17 V7 L14.5 3 Q15.7 .5 18.5 .5 H118 Q121 .5 121 3.5 V17" fill="url(#tg659)" stroke="#9fb1cd"/></svg>
<div class="t " style="left:667px;top:173px;color:#1d2a44">工段 - <span class="l">GLOBAL</span></div>
<svg style="left:752px;top:176px" width="8" height="8" viewBox="0 0 8 8"><path d="M.5 .5 L7.5 7.5 M7.5 .5 L.5 7.5" stroke="#a3adbd" stroke-width="1.3"/></svg>
<svg style="left:756px;top:171px" width="119" height="17"><defs><linearGradient id="tg768" x1="0" y1="0" x2="0" y2="1"><stop offset="0" stop-color="#f6f9fd"/><stop offset="1" stop-color="#e6edf8"/></linearGradient></defs><path d="M12.5 17 V7 L14.5 3 Q15.7 .5 18.5 .5 H115 Q118 .5 118 3.5 V17" fill="url(#tg768)" stroke="#9fb1cd"/></svg>
<div class="t " style="left:776px;top:173px;color:#1d2a44"><span class="l">S3 (MATERIAL)</span></div>
<svg style="left:859px;top:176px" width="8" height="8" viewBox="0 0 8 8"><path d="M.5 .5 L7.5 7.5 M7.5 .5 L.5 7.5" stroke="#a3adbd" stroke-width="1.3"/></svg>
<div class="a" style="left:876px;top:173px;width:1px;height:14px;background:#9fb1cd"></div>
<svg style="left:880px;top:174px" width="11" height="11" viewBox="0 0 11 11"><path d="M5.500 0 V11 M0 5.500 H11" stroke="#333" stroke-width="1.400"/></svg>
<div class="a" style="left:198px;top:188px;width:939px;height:696px;background:#dbe6f5"></div>
<div class="a" style="left:198px;top:188px;width:1px;height:685px;background:#8297b8"></div>
<div class="a" style="left:203px;top:193px;width:934px;height:674px;background:#fff"></div>
<div class="a" style="left:205px;top:195px;width:932px;height:670px;background:linear-gradient(#eff4fb 0%,#ecf2fa 40%,#d8e4f3 100%)"></div>
<div class="a" style="left:205px;top:194px;width:932px;height:1px;background:repeating-linear-gradient(90deg,#7c8796 0 1px,#e8eef7 1px 2px)"></div>
<div class="a" style="left:205px;top:865px;width:932px;height:1px;background:repeating-linear-gradient(90deg,#7c8796 0 1px,#e8eef7 1px 2px)"></div>
<div class="a" style="left:205px;top:194px;width:1px;height:672px;background:repeating-linear-gradient(0deg,#7c8796 0 1px,#e8eef7 1px 2px)"></div>
<svg style="left:214px;top:210px" width="8" height="13" viewBox="0 0 8 13"><path d="M.3 .3 L7.700 6.500 L.3 12.700Z" fill="#2f6ee0" stroke="#1f4fb8" stroke-width=".6"/></svg>
<svg style="left:241px;top:211px" width="7" height="11" viewBox="0 0 7 11"><path d="M.5 .5 L6.500 5.500 L.5 10.500Z" fill="#f7f9fd" stroke="#7e8ba6" stroke-width=".9"/></svg>
<svg style="left:266px;top:211px" width="10" height="10" viewBox="0 0 10 10"><rect x=".5" y=".5" width="9" height="9" fill="#a9adb3" stroke="#c6c9ce"/></svg>
<svg style="left:293px;top:210px" width="10" height="13" viewBox="0 0 10 13"><rect x="0" y="0" width="2.600" height="13" fill="#2556c4"/><path d="M10 .3 L3 6.500 L10 12.700Z" fill="#2f6ee0" stroke="#1f4fb8" stroke-width=".6"/></svg>
<div class="a" style="left:334px;top:206px;width:401px;height:24px;border:1px solid #a7abb1;border-radius:7px;background:linear-gradient(#f6f6f6 0%,#ebebeb 48%,#dcdcdc 52%,#e9e9e9 100%);box-sizing:border-box;box-shadow:0 1px 1px rgba(120,130,150,.35)"></div>
<div class="a" style="left:414px;top:207px;width:1px;height:22px;background:#b9bcc2"></div>
<div class="a" style="left:415px;top:207px;width:1px;height:22px;background:#fafafa"></div>
<div class="a" style="left:495px;top:207px;width:1px;height:22px;background:#b9bcc2"></div>
<div class="a" style="left:496px;top:207px;width:1px;height:22px;background:#fafafa"></div>
<div class="a" style="left:575px;top:207px;width:1px;height:22px;background:#b9bcc2"></div>
<div class="a" style="left:576px;top:207px;width:1px;height:22px;background:#fafafa"></div>
<div class="a" style="left:655px;top:207px;width:1px;height:22px;background:#b9bcc2"></div>
<div class="a" style="left:656px;top:207px;width:1px;height:22px;background:#fafafa"></div>
<div class="t c " style="left:315px;width:120px;top:211px;color:#1e1e1e">清除消息</div>
<div class="t c " style="left:395.5px;width:120px;top:211px;color:#1e1e1e">检查状态</div>
<div class="t c " style="left:476px;width:120px;top:211px;color:#1e1e1e">运行设置</div>
<div class="t c " style="left:555px;width:120px;top:211px;color:#1e1e1e">设置停止点</div>
<div class="t c " style="left:635px;width:120px;top:211px;color:#1e1e1e">收敛监视器</div>
<div class="t " style="left:210px;top:245px;">序列</div>
<div class="a" style="left:261px;top:242px;width:19px;height:19px;border:1px solid #a5acb8;border-radius:10px;background:linear-gradient(#ffffff,#e9edf3);box-sizing:border-box"></div>
<svg style="left:267px;top:247px" width="6" height="9" viewBox="0 0 6 9"><path d="M5 1 L1.500 4.500 L5 8" stroke="#444" stroke-width="1.700" fill="none"/></svg>
<div class="t " style="left:293px;top:245px;">消息</div>
<div class="a" style="left:210px;top:265px;width:74.5px;height:573px;background:#fff;border:1px solid #8c96a8;box-sizing:border-box"></div>
<svg style="left:216.5px;top:270px" width="8" height="8" viewBox="0 0 8 8"><path d="M7 .5 V7 H.5Z" fill="#3c3c3c"/></svg>
<svg style="left:233px;top:266px" width="12" height="15" viewBox="0 0 12 15"><path d="M.5 .5 H8 L11.500 4 V14.500 H.5Z" fill="#dfeafa" stroke="#5c7fb8"/><path d="M2.500 5h6M2.500 7.500h6M2.500 10h6M2.500 12.200h6" stroke="#7fa0d6" stroke-width="1"/><path d="M8 .5 V4 H11.500" fill="none" stroke="#5c7fb8" stroke-width=".8"/></svg>
<svg style="left:251px;top:283px" width="15" height="14" viewBox="0 0 15 14"><path d="M.5 4.500 H7.500 V.8 L14.300 7 L7.500 13.200 V9.500 H.5Z" fill="#2eb135" stroke="#167a1e" stroke-width=".9"/></svg>
<div class="t " style="left:266px;top:283px;"><span class="l">B1</span></div>
<div class="a" style="left:289px;top:265px;width:848px;height:571.5px;background:#fff;overflow:hidden"><pre style="position:absolute;left:7px;top:-3px;font-family:'DejaVu Sans Mono','Liberation Mono',monospace;font-size:11px;line-height:14px;color:#111;letter-spacing:0.378px">      PCES CANNOT USE GROUP-CONTRIBUTION METHODS TO ESTIMATE MISSING PROPERTIES

      STRUCTURE FOR COMPONENT CL- HAS NOT BEEN DEFINED.
      PCES CANNOT USE GROUP-CONTRIBUTION METHODS TO ESTIMATE MISSING PROPERTIES

  *   WARNING IN PHYSICAL PROPERTY SYSTEM
      EQUATION OF STATE MODEL ESRKU HAS MISSING PARAMETERS:
      TCRKU AND ITS DEFAULT TC (DATA SET 1) MISSING FOR COMPONENT POTAS-01

  *   WARNING IN PHYSICAL PROPERTY SYSTEM
      PCRKU AND ITS DEFAULT PC (DATA SET 1) MISSING FOR COMPONENT POTAS-01

  *   WARNING IN PHYSICAL PROPERTY SYSTEM
      TBRKU AND ITS DEFAULT TB (DATA SET 1) MISSING FOR COMPONENT POTAS-01

  *   WARNING IN PHYSICAL PROPERTY SYSTEM
      WILSON BINARY PARAMETERS FOR ALL COMPONENT PAIRS ARE ZERO,
      YOUR RESULTS MAY NOT BE ACCURATE. PLEASE REVIEW AND PROVIDE BINARY
      PARAMETERS AS APPROPRIATE.

  Flowsheet Analysis :

 COMPUTATION ORDER FOR THE FLOWSHEET:
 B1

-&gt;Calculations begin ...

      EQUATION OF STATE MODEL ESRK HAS MISSING PARAMETERS:
      TC (DATA SET 1) MISSING FOR COMPONENT POTAS-01

      PC (DATA SET 1) MISSING FOR COMPONENT POTAS-01

      IDEAL GAS MODEL HAS MISSING PARAMETERS:
      CPIG/1ST ELEMENT (DATA SET 1) MISSING FOR COMPONENT POTAS-01

  ****PROPERTY PARAMETER ERROR
      ERRORS ENCOUNTERED IN CALCULATION OF IDEAL GAS PROPS FOR
      GMXIG
      PLEASE FIX THE ERRORS, RE-INITIALIZE, AND RUN AGAIN.

! Calculations stopped because of missing  property parameters</pre></div>
<div class="a" style="left:208px;top:845.5px;width:18px;height:18px;border:1px solid #a5acb8;border-radius:9px;background:linear-gradient(#ffffff,#e6eaf1);box-sizing:border-box"></div>
<svg style="left:213px;top:851px" width="9" height="6" viewBox="0 0 9 6"><path d="M1 5 L4.500 1.500 L8 5" stroke="#444" stroke-width="1.600" fill="none"/></svg>
<div class="t " style="left:231px;top:847px;">显示 <span class="l">EO</span> 控制</div>
<div class="a" style="left:198px;top:866px;width:939px;height:13px;background:#dbe6f4"></div>
<div class="a" style="left:203px;top:866px;width:934px;height:4px;background:#fff"></div>
<div class="a" style="left:198px;top:872px;width:939px;height:1px;background:#a9b9d0"></div>
<div class="a" style="left:198px;top:877px;width:939px;height:1px;background:#b5c3d8"></div>
<div class="a" style="left:198px;top:878px;width:939px;height:1px;background:#8796b0"></div>
<div class="a" style="left:198px;top:879px;width:939px;height:23px;background:#dfe9f8"></div>
<div class="t " style="left:203.5px;top:883px;color:#6f8fc0">模型调色板</div>
<div class="a" style="left:198px;top:902px;width:939px;height:16px;background:#bccde6"></div>
<div class="a" style="left:203px;top:908px;width:20px;height:10px;background:#fff;border:1px solid #3a7a3a;border-bottom:none;box-sizing:border-box"></div>
<svg style="left:207px;top:912px" width="9" height="9" viewBox="0 0 9 9"><path d="M0 0 L9 5 L0 10Z" fill="#111"/></svg>
<div class="a" style="left:305px;top:905px;width:106px;height:13px;background:#f4f7fc;border-radius:2px 2px 0 0"></div>
<div class="a" style="left:198px;top:905px;width:939px;height:13px;overflow:hidden"><div class="t c" style="left:99px;width:120px;top:4px;color:#1d2a44">混合器/分流器</div><div class="t c" style="left:187px;width:120px;top:4px;color:#1d2a44">分离器</div><div class="t c" style="left:253px;width:120px;top:4px;color:#1d2a44">换热器</div><div class="t c" style="left:307px;width:120px;top:4px;color:#1d2a44">塔</div><div class="t c" style="left:362px;width:120px;top:4px;color:#1d2a44">反应器</div><div class="t c" style="left:447px;width:120px;top:4px;color:#1d2a44">压力变送设备</div><div class="t c" style="left:529px;width:120px;top:4px;color:#1d2a44">操纵器</div><div class="t c" style="left:590px;width:120px;top:4px;color:#1d2a44">固体</div><div class="t c" style="left:661px;width:120px;top:4px;color:#1d2a44">固体分离器</div><div class="t c" style="left:745px;width:120px;top:4px;color:#1d2a44">间歇模型</div><div class="t c" style="left:823px;width:120px;top:4px;color:#1d2a44">用户模型</div></div>
</body></html>
